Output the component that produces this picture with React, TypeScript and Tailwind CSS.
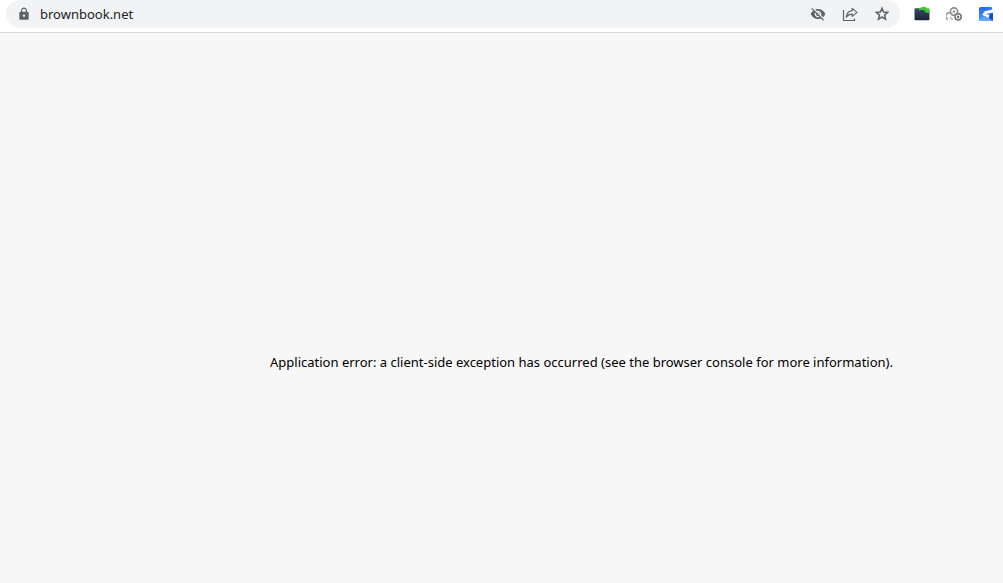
import React from 'react';
import { MdLock, MdVisibilityOff } from 'react-icons/md';

const StarIcon = () => (
    <svg viewBox="0 0 16 16" className="size-4" fill="none" stroke="currentColor" strokeWidth="1.5">
        <path d="M8 2.2L9.6 6L13.7 6.4L10.6 9.1L11.5 13.2L8 11L4.5 13.2L5.4 9.1L2.3 6.4L6.4 6Z" />
    </svg>
);

const ShareIcon = () => (
    <svg viewBox="0 0 16 16" className="size-4" fill="none" stroke="currentColor" strokeWidth="1.2">
        <path d="M1.5 4V14.5H12.5V12.5" />
        <path d="M10.2 2.4L15 6.4L10.2 10.4V8.2C7.6 8.2 5.7 9 4.2 11.2C4.6 7.6 6.5 5 10.2 4.6Z" strokeLinejoin="round" />
    </svg>
);

const FolderIcon = () => (
    <svg viewBox="0 0 16 16" className="size-4">
        <defs>
            <linearGradient id="folder" x1="0" y1="0" x2="0" y2="1">
                <stop offset="0" stopColor="#3a4c6b" />
                <stop offset="1" stopColor="#1a2438" />
            </linearGradient>
        </defs>
        <path d="M0.5 3.2Q0.5 2.2 1.5 2.2H5.5L7 3.5H14.5Q15.5 3.5 15.5 4.5V13Q15.5 14.2 14.5 14.2H1.5Q0.5 14.2 0.5 13Z" fill="url(#folder)" />
        <path d="M4.6 4.4C6 0.2 11 -0.4 13.4 2.6L15.2 2L14.8 7.2L10 5.8L11.4 4.8C9.8 3.6 7.4 3.4 4.6 4.4Z" fill="#3fcb2c" />
    </svg>
);

const RingsIcon = () => (
    <svg viewBox="0 0 16 16" className="size-4" fill="none">
        <circle cx="8" cy="5.6" r="3.7" stroke="#8c8c8c" strokeWidth="1.7" />
        <circle cx="8" cy="5.6" r="1.3" fill="#9c9c9c" />
        <path d="M2 13.4A3.4 3.4 0 1 1 6.6 10" stroke="#a0a0a0" strokeWidth="1.7" />
        <path d="M4 11.2L6.8 13.8" stroke="#b0b0b0" strokeWidth="1.5" />
        <circle cx="12.1" cy="10.8" r="3.1" fill="#ffffff" stroke="#777777" strokeWidth="1.6" />
        <circle cx="12.1" cy="10.8" r="1.2" fill="#666666" />
    </svg>
);

const BlueIcon = () => (
    <svg viewBox="0 0 16 16" className="size-4">
        <defs>
            <linearGradient id="blue" x1="0" y1="0" x2="0.4" y2="1">
                <stop offset="0" stopColor="#2465ee" />
                <stop offset="1" stopColor="#4d9bff" />
            </linearGradient>
        </defs>
        <path d="M2.5 1H13.4L14.4 3V5L15 8V15H2.5Q1 15 1 13.5V2.5Q1 1 2.5 1Z" fill="url(#blue)" />
        <path d="M1 13.5L6 10L15 15H2.5Q1 15 1 13.5Z" fill="#63a8ff" />
        <path d="M11.4 8L15 7V15L10.8 12Z" fill="#164edb" />
        <path d="M4.2 9L6.4 5.4L15.2 3.2V6.6L9 7.4L8.4 8.6L11.4 8.4L10.8 12L8 10.4Z" fill="#ffffff" />
    </svg>
);

const AddressBar = () => (
    <form className="flex h-7 flex-1 items-center rounded-full bg-[#f1f3f4] px-[11px] text-[#5f6368]" onSubmit={(e) => e.preventDefault()}>
        <MdLock className="size-3.5" />
        <input
            aria-label="Address"
            defaultValue="brownbook.net"
            className="ml-[9px] min-w-0 flex-1 bg-transparent pt-0.5 text-[13px] text-[#202124] outline-none"
        />
        <div className="-mr-px flex items-center gap-4">
            <button type="button" aria-label="Third-party cookies blocked">
                <MdVisibilityOff className="size-4" />
            </button>
            <button type="button" aria-label="Share this page">
                <ShareIcon />
            </button>
            <button type="button" aria-label="Bookmark this page">
                <StarIcon />
            </button>
        </div>
    </form>
);

export default function App() {
    return (
        <div className="flex min-h-screen flex-col bg-[#f7f7f7] font-['Noto_Sans','Open_Sans',sans-serif]">
            <header className="flex h-[33px] items-start gap-3.5 border-b border-[#d9dadc] bg-white pr-[9px] pl-1.5">
                <AddressBar />
                <div className="flex h-7 items-center gap-4">
                    <button type="button" aria-label="Folder extension">
                        <FolderIcon />
                    </button>
                    <button type="button" aria-label="Rings extension">
                        <RingsIcon />
                    </button>
                    <button type="button" aria-label="Blue extension">
                        <BlueIcon />
                    </button>
                </div>
            </header>
            <main className="flex flex-1 items-center justify-center pt-[110px] pl-40">
                <h2 className="text-[13px] whitespace-nowrap text-black">
                    Application error: a client-side exception has occurred (see the browser console for more information).
                </h2>
            </main>
        </div>
    );
}
